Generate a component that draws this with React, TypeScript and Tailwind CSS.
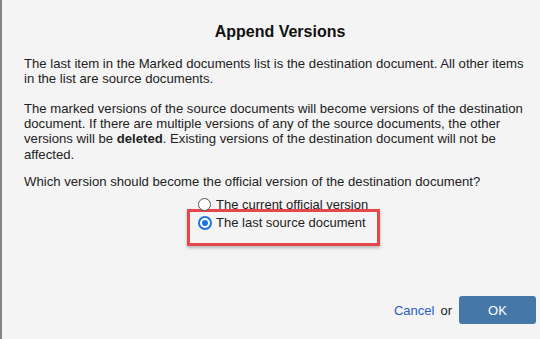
import React from "react";

function Radio({ checked }: { checked?: boolean }) {
  if (checked) {
    return (
      <span className="w-[14px] h-[14px] rounded-full border-[2px] border-[#1a73e8] bg-white flex items-center justify-center shrink-0">
        <span className="w-[6px] h-[6px] rounded-full bg-[#1a73e8]" />
      </span>
    );
  }
  return <span className="w-[13px] h-[13px] rounded-full border border-[#555] bg-white shrink-0" />;
}

export default function App() {
  return (
    <div className="w-[540px] h-[339px] bg-[#f4f4f4] border-l-2 border-[#858585] flex flex-col font-['Liberation_Sans',Arial,sans-serif] text-[13px] leading-[15px] text-[#222] overflow-hidden">
      <h1 className="pt-[22px] pl-[18px] text-center text-[16px] leading-[19px] font-bold text-[#111]">
        Append Versions
      </h1>
      <div className="pl-[22px] pr-[13px] mt-[15px]">
        <p className="text-[13.15px] leading-[15.2px]">
          The last item in the Marked documents list is the destination document. All other items in the list are
          source documents.
        </p>
        <p className="mt-[14.6px] text-[13.15px] leading-[15.2px]">
          The marked versions of the source documents will become versions of the destination document. If there are
          multiple versions of any of the source documents, the other versions will be <b>deleted</b>. Existing versions
          of the destination document will not be affected.
        </p>
        <p className="mt-[12.4px] text-[13.15px] leading-[15.2px]">
          Which version should become the official version of the destination document?
        </p>
        <div className="mt-[8px] pl-[174px] flex items-center gap-[5px] h-[15px]">
          <Radio />
          <span>The current official version</span>
        </div>
        <div className="ml-[163px] -mt-[3px] w-[193px] h-[37px] border-[3px] border-[#e5474c] shadow-[0_2px_3px_rgba(0,0,0,0.25)] pl-[8px] pt-[3px]">
          <div className="flex items-center gap-[4px] h-[15px]">
            <Radio checked />
            <span>The last source document</span>
          </div>
        </div>
      </div>
      <div className="mt-auto mb-[15px] pr-[4px] flex items-center justify-end">
        <span className="text-[#2a5bc4]">Cancel</span>
        <span className="ml-[6px]">or</span>
        <button className="ml-[7px] w-[77px] h-[28px] rounded-[3px] bg-[#4577a8] text-white text-[13px]">OK</button>
      </div>
    </div>
  );
}
